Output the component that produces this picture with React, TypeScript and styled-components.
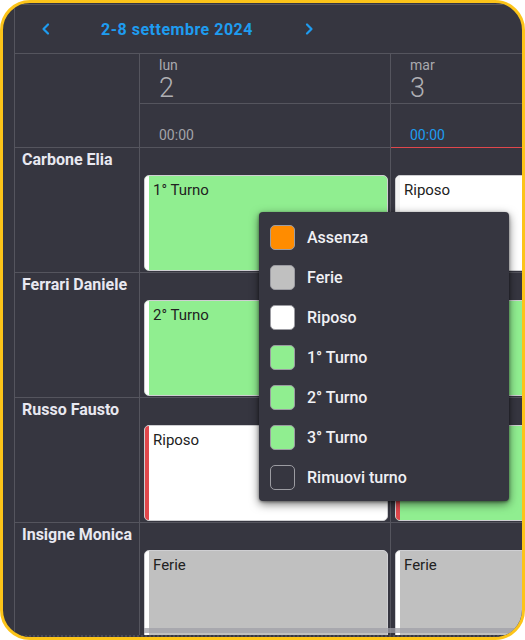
import React from 'react'
import styled, { createGlobalStyle } from 'styled-components'

const GlobalStyle = createGlobalStyle`
  html, body {
    margin: 0;
    padding: 0;
    background: #ffffff;
  }
  * {
    box-sizing: border-box;
  }
`

const Frame = styled.div`
  position: relative;
  width: 525px;
  height: 640px;
  border: 3px solid #fcc419;
  border-radius: 30px;
  background: #363640;
  overflow: hidden;
  padding: 1px 0 0 11px;
  font-family: Roboto, 'Noto Sans', sans-serif;
`

const Scheduler = styled.div`
  position: relative;
  width: 640px;
  height: 100%;
  display: flex;
  flex-direction: column;
  border-top: 1px solid #55555e;
  border-left: 1px solid #55555e;
  border-bottom: 2px dotted #4c4c56;
  overflow: hidden;
`

const Toolbar = styled.div`
  display: flex;
  align-items: center;
  height: 49px;
  border-bottom: 1px solid #55555e;
  flex-shrink: 0;
`

const NavButton = styled.button<{ $offset: number }>`
  width: 24px;
  height: 24px;
  margin-left: ${p => p.$offset}px;
  padding: 0;
  border: none;
  background: none;
  color: #1e9cf0;
  display: flex;
  align-items: center;
  justify-content: center;
  cursor: pointer;
`

const Title = styled.div`
  width: 164px;
  margin-left: 37px;
  text-align: center;
  color: #1e9cf0;
  font-size: 16px;
  font-weight: 700;
  letter-spacing: 0.5px;
`

const Grid = styled.div`
  display: grid;
  grid-template-columns: 125px 251px 251px;
`

const Cell = styled.div`
  border-right: 1px solid #55555e;
  border-bottom: 1px solid #55555e;
`

const HeaderCell = styled(Cell)`
  height: 94px;
  display: flex;
  flex-direction: column;
`

const DayName = styled.div`
  height: 50px;
  padding: 4px 0 0 19px;
  border-bottom: 1px solid #55555e;
  color: #a9a9ae;
`

const Weekday = styled.div`
  font-size: 14px;
  line-height: 15px;
`

const DayNumber = styled.div`
  margin-top: 3px;
  font-size: 27px;
  line-height: 24px;
  font-weight: 300;
  color: #b0b0b4;
`

const TimeSlot = styled.div<{ $today?: boolean }>`
  flex: 1;
  display: flex;
  align-items: flex-end;
  padding: 0 0 4px 19px;
  font-size: 14px;
  color: ${p => (p.$today ? '#1e9cf0' : '#a3a3a8')};
  box-shadow: ${p => (p.$today ? '0 1px 0 0 #e0474c' : 'none')};
`

const ResourceCell = styled(Cell)`
  height: 125px;
  padding: 2px 7px;
  color: #e8e8f0;
  font-size: 16px;
  font-weight: 700;
`

const DayCell = styled(Cell)`
  height: 125px;
  padding: 27px 2px 1px 4px;
`

const EventBox = styled.div<{ $fill: string }>`
  height: 100%;
  display: flex;
  background: ${p => p.$fill};
  border: 1px solid #cfcfd2;
  border-radius: 5px;
  overflow: hidden;
  color: #222;
  font-size: 15px;
`

const Stripe = styled.div<{ $color: string }>`
  width: 4px;
  background: ${p => p.$color};
  flex-shrink: 0;
`

const EventLabel = styled.div`
  padding: 5px 0 0 4px;
`

const ScrollThumb = styled.div`
  position: absolute;
  left: 129px;
  right: 0;
  bottom: 2px;
  height: 5px;
  background: rgba(160, 160, 168, 0.75);
`

const Menu = styled.div`
  position: absolute;
  left: 256px;
  top: 209px;
  width: 250px;
  padding: 5px 0 4px;
  background: #363640;
  border-radius: 4px;
  box-shadow: 0 3px 10px rgba(0, 0, 0, 0.55), 0 1px 3px rgba(0, 0, 0, 0.4);
`

const MenuItem = styled.div`
  display: flex;
  align-items: center;
  height: 40px;
  padding-left: 11px;
  gap: 12px;
  color: #f0f0f4;
  font-size: 16px;
  font-weight: 500;
  cursor: pointer;
`

const Swatch = styled.span<{ $color: string }>`
  width: 25px;
  height: 25px;
  border-radius: 5px;
  background: ${p => p.$color};
  border: 1px solid #9c9ca2;
`

type Shift = { label: string; fill: string; stripe: string }

const shifts: Record<string, Shift> = {
  t1: { label: '1° Turno', fill: '#90ee90', stripe: '#ffffff' },
  t2: { label: '2° Turno', fill: '#90ee90', stripe: '#ffffff' },
  t2late: { label: '2° Turno', fill: '#90ee90', stripe: '#e0474c' },
  rest: { label: 'Riposo', fill: '#ffffff', stripe: '#e0474c' },
  restOk: { label: 'Riposo', fill: '#ffffff', stripe: '#f4f4f4' },
  leave: { label: 'Ferie', fill: '#c0c0c0', stripe: '#ffffff' },
}

const days = [
  { weekday: 'lun', day: 2, today: false },
  { weekday: 'mar', day: 3, today: true },
]

const staff = [
  { name: 'Carbone Elia', shifts: ['t1', 'restOk'] },
  { name: 'Ferrari Daniele', shifts: ['t2', 't2'] },
  { name: 'Russo Fausto', shifts: ['rest', 't2late'] },
  { name: 'Insigne Monica', shifts: ['leave', 'leave'] },
]

const menuOptions = [
  { label: 'Assenza', color: '#ff8c00' },
  { label: 'Ferie', color: '#c0c0c0' },
  { label: 'Riposo', color: '#ffffff' },
  { label: '1° Turno', color: '#90ee90' },
  { label: '2° Turno', color: '#90ee90' },
  { label: '3° Turno', color: '#90ee90' },
  { label: 'Rimuovi turno', color: 'transparent' },
]

const Chevron = ({ dir }: { dir: 'left' | 'right' }) => (
  <svg width="14" height="14" viewBox="0 0 14 14" fill="none">
    <path
      d={dir === 'left' ? 'M9 2.5 L4.5 7 L9 11.5' : 'M5 2.5 L9.5 7 L5 11.5'}
      stroke="currentColor"
      strokeWidth="2.2"
      strokeLinecap="round"
      strokeLinejoin="round"
    />
  </svg>
)

const App: React.FC = () => {
  return (
    <>
      <GlobalStyle />
      <Frame>
        <Scheduler>
          <Toolbar>
            <NavButton $offset={19}>
              <Chevron dir="left" />
            </NavButton>
            <Title>2-8 settembre 2024</Title>
            <NavButton $offset={38}>
              <Chevron dir="right" />
            </NavButton>
          </Toolbar>

          <Grid>
            <HeaderCell />
            {days.map(d => (
              <HeaderCell key={d.day}>
                <DayName>
                  <Weekday>{d.weekday}</Weekday>
                  <DayNumber>{d.day}</DayNumber>
                </DayName>
                <TimeSlot $today={d.today}>00:00</TimeSlot>
              </HeaderCell>
            ))}

            {staff.map(person => (
              <React.Fragment key={person.name}>
                <ResourceCell>{person.name}</ResourceCell>
                {person.shifts.map((key, i) => {
                  const shift = shifts[key]
                  return (
                    <DayCell key={i}>
                      <EventBox $fill={shift.fill}>
                        <Stripe $color={shift.stripe} />
                        <EventLabel>{shift.label}</EventLabel>
                      </EventBox>
                    </DayCell>
                  )
                })}
              </React.Fragment>
            ))}
          </Grid>

          <ScrollThumb />
        </Scheduler>

        <Menu>
          {menuOptions.map(option => (
            <MenuItem key={option.label}>
              <Swatch $color={option.color} />
              {option.label}
            </MenuItem>
          ))}
        </Menu>
      </Frame>
    </>
  )
}

export default App
